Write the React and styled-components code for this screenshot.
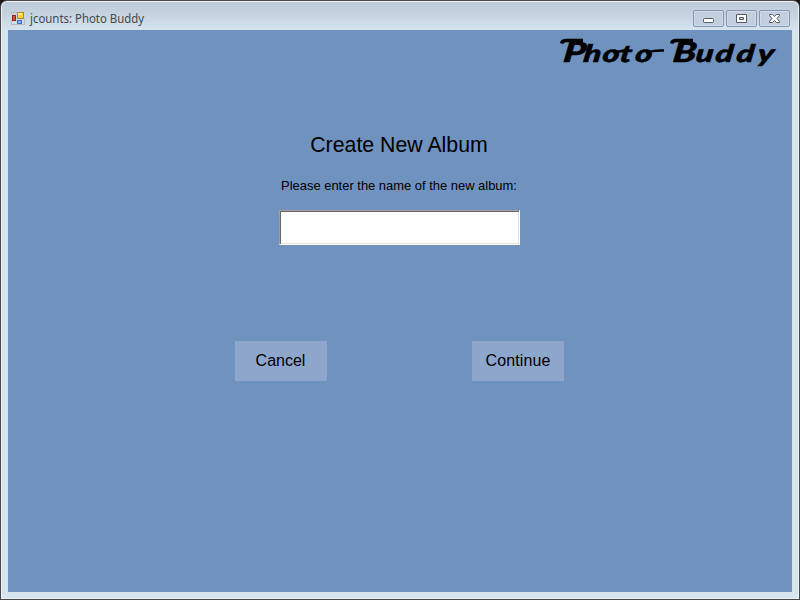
import React from 'react';
import styled, { createGlobalStyle } from 'styled-components';

const Global = createGlobalStyle`
  * { box-sizing: border-box; }
  body { margin: 0; background: #1a1718; overflow: hidden; }
`;
const Window = styled.div`
  width: 800px; height: 600px; display: flex; flex-direction: column;
  border: 1px solid #4b484d; border-radius: 7px 7px 0 0;
  padding: 0 7px 7px;
  background: linear-gradient(#bccad9 0, #c6d3e0 14px, #d7e4f0 29px, #d7e4f0 100%);
  box-shadow: inset 0 0 0 1px #eaf1f7;
`;
const TitleBar = styled.header`
  height: 29px; flex: none; display: flex; align-items: flex-start;
  padding: 9px 2px 0 3px;
`;
const Title = styled.h1`
  margin: 1px 0 0 4px; flex: 1; font: 12px/16px "Noto Sans", "Open Sans", sans-serif;
  color: #434950;
`;
const TitleText = styled.span`
  display: inline-block; transform: scaleX(0.95); transform-origin: 0 0; white-space: nowrap;
`;
const Controls = styled.div`display: flex; gap: 2px;`;
const ControlButton = styled.button`
  width: 31px; height: 17px; padding: 0; display: grid; place-items: center;
  border: 1px solid #8795b0; border-radius: 2px; background: #c1cfdf;
  box-shadow: inset 0 0 0 1px #d0dcea;
`;
const Content = styled.main`
  flex: 1; background: #6f92bf; display: flex; flex-direction: column; align-items: center;
  font-family: "Liberation Sans", Arial, sans-serif; color: #000;
`;
const Logo = styled.svg`
  display: block; align-self: flex-end; margin: 4px 11px 0 0; flex: none; overflow: visible;
`;
const Wordmark = styled.text`
  font: italic 900 24px Lato, sans-serif; stroke: #000; stroke-width: 0.5px;
`;
const Initial = styled.tspan`font-size: 28px;`;
const Heading = styled.h2`
  margin: 58px 0 0; padding-right: 2px; font-size: 21.3px; line-height: 26px; font-weight: 400; white-space: nowrap;
`;
const Prompt = styled.label`
  margin: 20px 0 0; padding-right: 2px; font-size: 12.95px; line-height: 16px; white-space: nowrap;
`;
const NameInput = styled.input`
  margin: 16px 2px 0 0; width: 241px; height: 35px; padding: 0 6px; outline: 0; background: #fff;
  border: 1px solid; border-color: #a0a0a0 #fff #fff #a0a0a0; border-radius: 0;
  box-shadow: inset 1px 1px #696969, inset -1px -1px #e3e3e3;
  font: 16px "Liberation Sans", Arial, sans-serif;
`;
const Actions = styled.div`margin: 96px 2px 0 0; display: flex; gap: 145px;`;
const ActionButton = styled.button`
  width: 92px; height: 40px; padding: 0 0 1px ${p => p.$indent || 0}px; border: 0; background: #8ea6cc; color: #000;
  font: 16px "Liberation Sans", Arial, sans-serif; letter-spacing: ${p => p.$tracking || 0}px;
`;

function AppIcon() {
  return (
    <svg width="15" height="15" viewBox="0 0 15 15" shapeRendering="crispEdges">
      <path d="M.5 4V2.500h5M.5 10v4.500h13V9" fill="none" stroke="#b9b9b5" />
      <rect x="1.500" y="5.500" width="3" height="5" fill="#e04a30" stroke="#a31b12" />
      <rect x="6.500" y="2.500" width="6" height="6" fill="#fcd43c" stroke="#b98717" />
      <rect x="7" y="3" width="4" height="2" fill="#ffeb9a" />
      <rect x="6.500" y="10.500" width="4" height="3" fill="#82b2f8" stroke="#3e6dd0" />
    </svg>
  );
}

export default function App() {
  return (
    <>
      <Global />
      <Window>
        <TitleBar>
          <AppIcon />
          <Title><TitleText>jcounts: Photo Buddy</TitleText></Title>
          <Controls>
            <ControlButton aria-label="Minimize">
              <svg width="12" height="9"><rect x=".5" y="4.500" width="10" height="4" rx="1" fill="#fff" stroke="#555965" /></svg>
            </ControlButton>
            <ControlButton aria-label="Maximize">
              <svg width="12" height="9"><path d="M.5.5h10v8H.5zM3.500 3.500v2h4v-2z" fill="#fff" fillRule="evenodd" stroke="#555965" /></svg>
            </ControlButton>
            <ControlButton aria-label="Close">
              <svg width="12" height="9"><path d="M.5.5h3l2 2 2-2h3v1L8 4.500l2.500 3v1h-3l-2-2-2 2h-3v-1l2.500-3-2.500-3z" fill="#fff" stroke="#555965" /></svg>
            </ControlButton>
          </Controls>
        </TitleBar>
        <Content>
          <Logo width="224" height="40" viewBox="556 34 224 40">
            <g transform="translate(556 61.500) skewX(-7) scale(1.36 1)">
              <Wordmark x="4 19 33 45.500 57" y="0"><Initial>P</Initial>hoto</Wordmark>
              <Wordmark x="84.500 101.500 116 131.500 147" y="0"><Initial>B</Initial>uddy</Wordmark>
            </g>
            <g fill="none" stroke="#000">
              <path d="M560.500 43.500q1-3 4.500-3h17M670.500 43.500q1-3 4.500-3h17" strokeWidth="3.500" />
              <path d="M612 52.500q6-1 12-2M645 53q7-3 18-2.500" strokeWidth="2.500" />
            </g>
          </Logo>
          <Heading>Create New Album</Heading>
          <Prompt htmlFor="album-name">Please enter the name of the new album:</Prompt>
          <NameInput id="album-name" />
          <Actions>
            <ActionButton>Cancel</ActionButton>
            <ActionButton $tracking={0.12} $indent={1}>Continue</ActionButton>
          </Actions>
        </Content>
      </Window>
    </>
  );
}
